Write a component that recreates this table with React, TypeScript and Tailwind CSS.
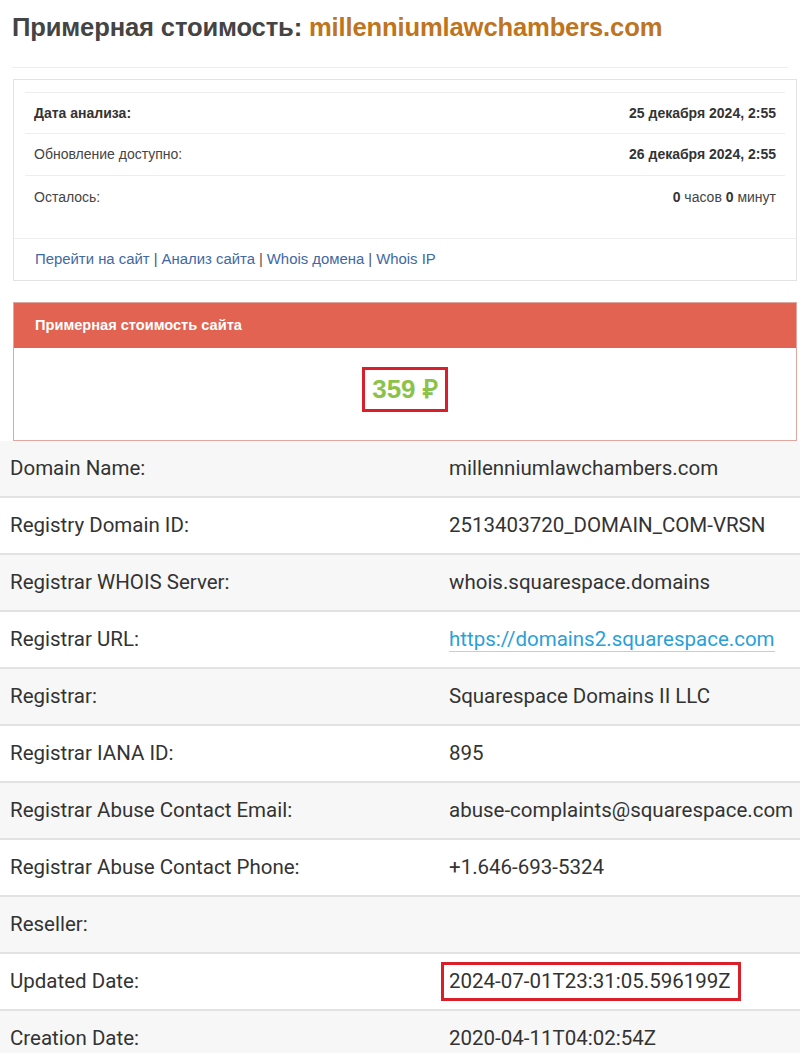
import React from "react";

const whois: [string, string, "link" | "box" | undefined][] = [
  ["Domain Name:", "millenniumlawchambers.com", undefined],
  ["Registry Domain ID:", "2513403720_DOMAIN_COM-VRSN", undefined],
  ["Registrar WHOIS Server:", "whois.squarespace.domains", undefined],
  ["Registrar URL:", "https://domains2.squarespace.com", "link"],
  ["Registrar:", "Squarespace Domains II LLC", undefined],
  ["Registrar IANA ID:", "895", undefined],
  ["Registrar Abuse Contact Email:", "abuse-complaints@squarespace.com", undefined],
  ["Registrar Abuse Contact Phone:", "+1.646-693-5324", undefined],
  ["Reseller:", "", undefined],
  ["Updated Date:", "2024-07-01T23:31:05.596199Z", "box"],
  ["Creation Date:", "2020-04-11T04:02:54Z", undefined],
];

export default function App() {
  return (
    <div className="w-[800px] bg-white" style={{ fontFamily: '"Liberation Sans", Arial, sans-serif' }}>
      <div className="px-3 pt-[12px]">
        <h1 className="text-[25.6px] font-bold leading-[30px] text-[#444] tracking-[-0.15px]">
          Примерная стоимость: <span className="text-[#bf7420]">millenniumlawchambers.com</span>
        </h1>
        <div className="mt-[25px] border-t border-[#eee]" />
      </div>

      <div className="ml-[13px] mr-[3px] mt-[11px] border border-[#e3e3e3] text-[14px] text-[#444]">
        <div className="px-[11px] pt-[12px]">
          <div className="border-t border-[#eee]">
            <div className="flex h-[41px] items-center justify-between border-b border-[#eee] px-[9px]">
              <span className="font-bold text-[#333]">Дата анализа:</span>
              <span className="font-bold text-[#333]">25 декабря 2024, 2:55</span>
            </div>
            <div className="flex h-[42px] items-center justify-between border-b border-[#eee] px-[9px]">
              <span>Обновление доступно:</span>
              <span className="font-bold text-[#333]">26 декабря 2024, 2:55</span>
            </div>
            <div className="flex h-[42px] items-center justify-between px-[9px]">
              <span>Осталось:</span>
              <span>
                <b className="text-[#333]">0</b> часов <b className="text-[#333]">0</b> минут
              </span>
            </div>
          </div>
        </div>
        <div className="mt-[20px] flex h-[42px] items-center border-t border-[#eee] px-[21px] text-[14.9px] text-[#555]">
          <span className="text-[#3f69a3]">Перейти на сайт</span>
          <span className="mx-[4px]">|</span>
          <span className="text-[#3f69a3]">Анализ сайта</span>
          <span className="mx-[4px]">|</span>
          <span className="text-[#3f69a3]">Whois домена</span>
          <span className="mx-[4px]">|</span>
          <span className="text-[#3f69a3]">Whois IP</span>
        </div>
      </div>

      <div className="ml-[13px] mr-[3px] mt-[21px] border border-[#dfa79f]">
        <div className="flex h-[45px] items-center bg-[#e26352] px-[21px] text-[14.6px] font-bold text-white">
          Примерная стоимость сайта
        </div>
        <div className="flex h-[92px] items-center justify-center">
          <div className="-mt-[10px] border-[3px] border-[#d81f2a] px-[7px] py-[3px] text-[26px] font-bold leading-[33px] text-[#8bc34a]">
            359 ₽
          </div>
        </div>
      </div>

      <div className="text-[20.5px] text-[#333]" style={{ fontFamily: 'Roboto, "Liberation Sans", sans-serif' }}>
        {whois.map(([k, v, kind], i) => (
          <div
            key={k}
            className={`grid h-[57px] grid-cols-[439px_1fr] items-center border-b-2 border-[#e2e2e2] ${
              i % 2 === 0 ? "bg-[#f7f7f7]" : "bg-white"
            } ${i === 0 ? "h-[55px]" : ""}`}
          >
            <div className="pl-[10px]">{k}</div>
            <div className="pl-[10px]">
              {kind === "link" ? (
                <span className="border-b border-[#a8d8f0] text-[#2b9fd8]">{v}</span>
              ) : kind === "box" ? (
                <span className="-ml-[8px] inline-block border-[3px] border-[#d81f2a] pl-[5px] pr-[7px] py-[1px]">{v}</span>
              ) : (
                v
              )}
            </div>
          </div>
        ))}
      </div>
    </div>
  );
}
